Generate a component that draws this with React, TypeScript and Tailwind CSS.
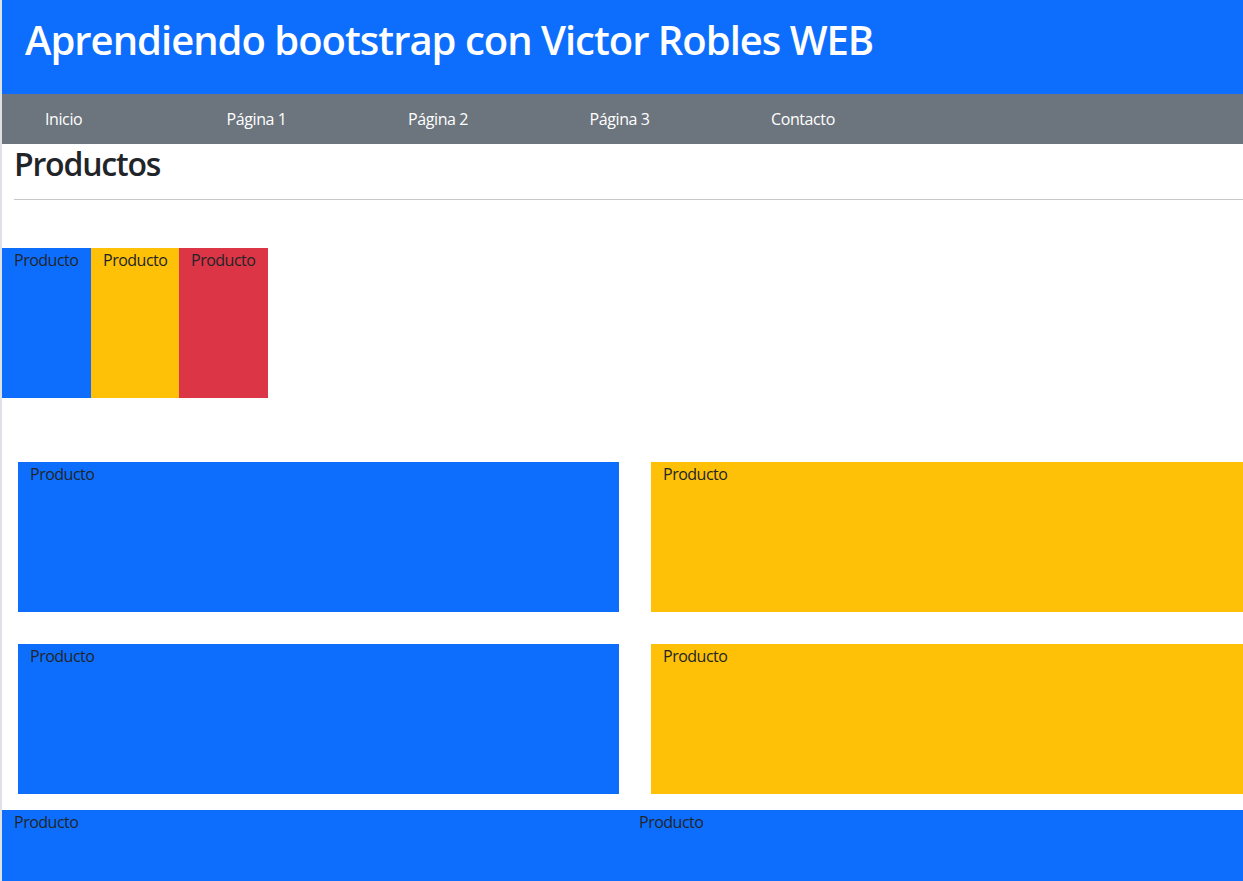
import React from "react";

const font = { fontFamily: "'Open Sans', 'Noto Sans', sans-serif" };

const navItems = ["Inicio", "Página 1", "Página 2", "Página 3", "Contacto"];

// Product tile
function Box({ className }: { className: string }) {
  return (
    <div className={`h-[150px] pl-3 text-base leading-6 tracking-[-0.5px] text-[#212529] ${className}`}>
      Producto
    </div>
  );
}

export default function App() {
  return (
    <div style={font} className="flex h-[881px] w-[1243px] overflow-hidden bg-white">
      <div className="w-[2px] shrink-0 bg-[#dee2e6]" />
      <div className="min-w-0 flex-1">
        {/* Header */}
        <header className="h-[94px] bg-[#0d6efd] pl-[23px] pt-4">
          <h1 className="whitespace-nowrap text-[40px] font-semibold leading-[1.2] tracking-[-1px] text-white">
            Aprendiendo bootstrap con Victor Robles WEB
          </h1>
        </header>

        {/* Nav */}
        <nav className="flex h-[50px] items-center bg-[#6c757d]">
          {navItems.map((item) => (
            <a key={item} className="w-[181.5px] shrink-0 pl-[43px] text-base tracking-[-0.4px] text-white">
              {item}
            </a>
          ))}
        </nav>

        {/* Productos */}
        <section className="pl-3 pt-px">
          <h2 className="text-[32px] font-semibold leading-[1.2] tracking-[-1.2px] text-[#212529]">Productos</h2>
          <hr className="mt-4 border-t border-[#c6c7c8]" />
        </section>

        <div className="mt-[48px] flex">
          <Box className="w-[89px] bg-[#0d6efd]" />
          <Box className="w-[88px] bg-[#ffc107]" />
          <Box className="w-[89px] bg-[#dc3545]" />
        </div>

        <div className="mt-16 grid grid-cols-[601px_601px] gap-8 pl-4">
          <Box className="bg-[#0d6efd]" />
          <Box className="bg-[#ffc107]" />
          <Box className="bg-[#0d6efd]" />
          <Box className="bg-[#ffc107]" />
        </div>

        <div className="mt-4 flex">
          <Box className="w-[625px] shrink-0 bg-[#0d6efd]" />
          <Box className="w-[625px] shrink-0 bg-[#0d6efd]" />
        </div>
      </div>
    </div>
  );
}
